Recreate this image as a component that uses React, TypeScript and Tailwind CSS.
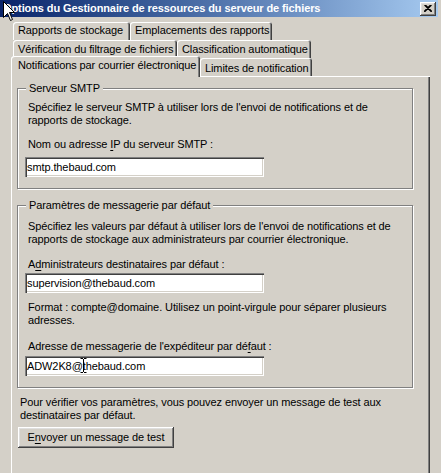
import React from 'react'

const raised =
  'shadow-[inset_-1px_-1px_0_#404040,inset_1px_1px_0_#ffffff,inset_-2px_-2px_0_#808080,inset_2px_2px_0_#dfdfdf]'

const tabEdge = 'shadow-[inset_1px_1px_0_#ffffff,inset_-1px_0_0_#404040,inset_-2px_0_0_#808080]'

function Tab({ label, width, pad }: { label: string; width: string; pad: string }) {
  return (
    <div
      className={`h-[18px] shrink-0 whitespace-nowrap rounded-t-[3px] bg-[#d4d0c8] pl-[5px] ${tabEdge} ${width} ${pad}`}
    >
      {label}
    </div>
  )
}

function TextBox({ value, children }: { value: string; children?: React.ReactNode }) {
  return (
    <div className="relative flex h-[20px] w-[239px] items-center bg-white pl-[2px] shadow-[inset_1px_1px_0_#808080,inset_2px_2px_0_#404040,inset_-1px_-1px_0_#ffffff,inset_-2px_-2px_0_#d4d0c8]">
      <span className="leading-[16px]">{value}</span>
      {children}
    </div>
  )
}

function Cursor() {
  return (
    <svg className="absolute left-[3px] top-[1px]" width="13" height="21" viewBox="0 0 13 21">
      <path
        d="M0.5 0.5 L0.5 16.5 L4.5 12.5 L7.5 19.5 L9.5 18.5 L6.5 11.5 L11.5 11.5 Z"
        fill="#ffffff"
        stroke="#000000"
        strokeWidth="1"
      />
    </svg>
  )
}

export default function App() {
  return (
    <div className="relative flex h-[473px] w-[441px] flex-col overflow-hidden bg-[#d4d0c8] font-['Liberation_Sans',Arial,sans-serif] text-[11px] leading-[13px] tracking-[-0.1px] text-black">
      {/* title bar */}
      <div className="flex h-[17px] w-[438px] shrink-0 items-center justify-between bg-gradient-to-r from-[#0a246a] to-[#a6caf0] pl-[3px]">
        <span className="whitespace-nowrap text-[11px] font-bold text-white">
          Options du Gestionnaire de ressources du serveur de fichiers
        </span>
        <div className={`mr-[2px] flex h-[14px] w-[16px] items-center justify-center bg-[#d4d0c8] ${raised}`}>
          <svg width="8" height="7" viewBox="0 0 8 7">
            <path d="M0.5 0 L7.5 7 M1.5 0 L8 6.5 M7.5 0 L0.5 7 M6.5 0 L0 6.5" stroke="#000000" strokeWidth="1.1" />
          </svg>
        </div>
      </div>

      {/* tab rows */}
      <div className="mt-[5px] flex h-[18px] shrink-0 pl-[13px]">
        <Tab label="Rapports de stockage" width="w-[117px]" pad="pt-[2px]" />
        <Tab label="Emplacements des rapports" width="w-[142px]" pad="pt-[2px]" />
      </div>
      <div className="flex h-[18px] shrink-0 pl-[13px]">
        <Tab label="Vérification du filtrage de fichiers" width="w-[164px]" pad="pt-[3px]" />
        <Tab label="Classification automatique" width="w-[134px]" pad="pt-[3px]" />
      </div>
      <div className="relative z-10 -mt-[2px] flex h-[20px] shrink-0 items-start pl-[11px]">
        <div
          className={`h-[21px] w-[189px] shrink-0 whitespace-nowrap rounded-t-[3px] bg-[#d4d0c8] pl-[7px] pt-[3px] ${tabEdge}`}
        >
          Notifications par courrier électronique
        </div>
        <div
          className={`mt-[2px] h-[18px] w-[112px] shrink-0 whitespace-nowrap rounded-t-[3px] bg-[#d4d0c8] pl-[5px] pt-[4px] ${tabEdge}`}
        >
          Limites de notification
        </div>
      </div>

      {/* tab page */}
      <div className={`ml-[11px] flex h-[400px] w-[419px] shrink-0 flex-col pl-[6px] pt-[12px] ${tabEdge}`}>
        <div className="relative flex w-[396px] flex-col border border-[#808080] pb-[11px] pl-[7px] pt-[12px] shadow-[1px_1px_0_#ffffff,inset_1px_1px_0_#ffffff]">
          <span className="absolute -top-[7px] left-[8px] bg-[#d4d0c8] px-[3px]">Serveur SMTP</span>
          <p className="pl-[3px]">
            Spécifiez le serveur SMTP à utiliser lors de l'envoi de notifications et de
            <br />
            rapports de stockage.
          </p>
          <p className="mt-[11px] pl-[3px]">
            Nom ou adresse <span className="underline underline-offset-[2px]">I</span>P du serveur SMTP :
          </p>
          <div className="mt-[6px]">
            <TextBox value="smtp.thebaud.com" />
          </div>
        </div>

        <div className="relative mt-[16px] flex w-[396px] flex-col border border-[#808080] pb-[11px] pl-[7px] pt-[14px] shadow-[1px_1px_0_#ffffff,inset_1px_1px_0_#ffffff]">
          <span className="absolute -top-[7px] left-[8px] bg-[#d4d0c8] px-[3px]">
            Paramètres de messagerie par défaut
          </span>
          <p className="pl-[3px]">
            Spécifiez les valeurs par défaut à utiliser lors de l'envoi de notifications et de
            <br />
            rapports de stockage aux administrateurs par courrier électronique.
          </p>
          <p className="mt-[12px] pl-[3px]">
            A<span className="underline underline-offset-[2px]">d</span>ministrateurs destinataires par défaut :
          </p>
          <div className="mt-[2px]">
            <TextBox value="supervision@thebaud.com" />
          </div>
          <p className="mt-[8px] pl-[3px]">
            Format : compte@domaine. Utilisez un point-virgule pour séparer plusieurs
            <br />
            adresses.
          </p>
          <p className="mt-[13px] pl-[3px]">
            Adresse de messagerie de l'expéditeur par dé
            <span className="underline underline-offset-[2px]">f</span>aut :
          </p>
          <div className="mt-[3px]">
            <TextBox value="ADW2K8@thebaud.com">
              <svg className="absolute left-[55px] top-[2px]" width="7" height="15" viewBox="0 0 7 15">
                <path
                  d="M0.5 0.5 H3 M4 0.5 H6.5 M3.5 1 V14 M0.5 14.5 H3 M4 14.5 H6.5"
                  stroke="#000000"
                  strokeWidth="1"
                  fill="none"
                />
              </svg>
            </TextBox>
          </div>
        </div>

        <p className="ml-[3px] mt-[8px]">
          Pour vérifier vos paramètres, vous pouvez envoyer un message de test aux
          <br />
          destinataires par défaut.
        </p>
        <div className={`ml-[1px] mt-[5px] flex h-[21px] w-[156px] items-center justify-center bg-[#d4d0c8] ${raised}`}>
          <span>
            E<span className="underline underline-offset-[2px]">n</span>voyer un message de test
          </span>
        </div>
      </div>

      <Cursor />
    </div>
  )
}
